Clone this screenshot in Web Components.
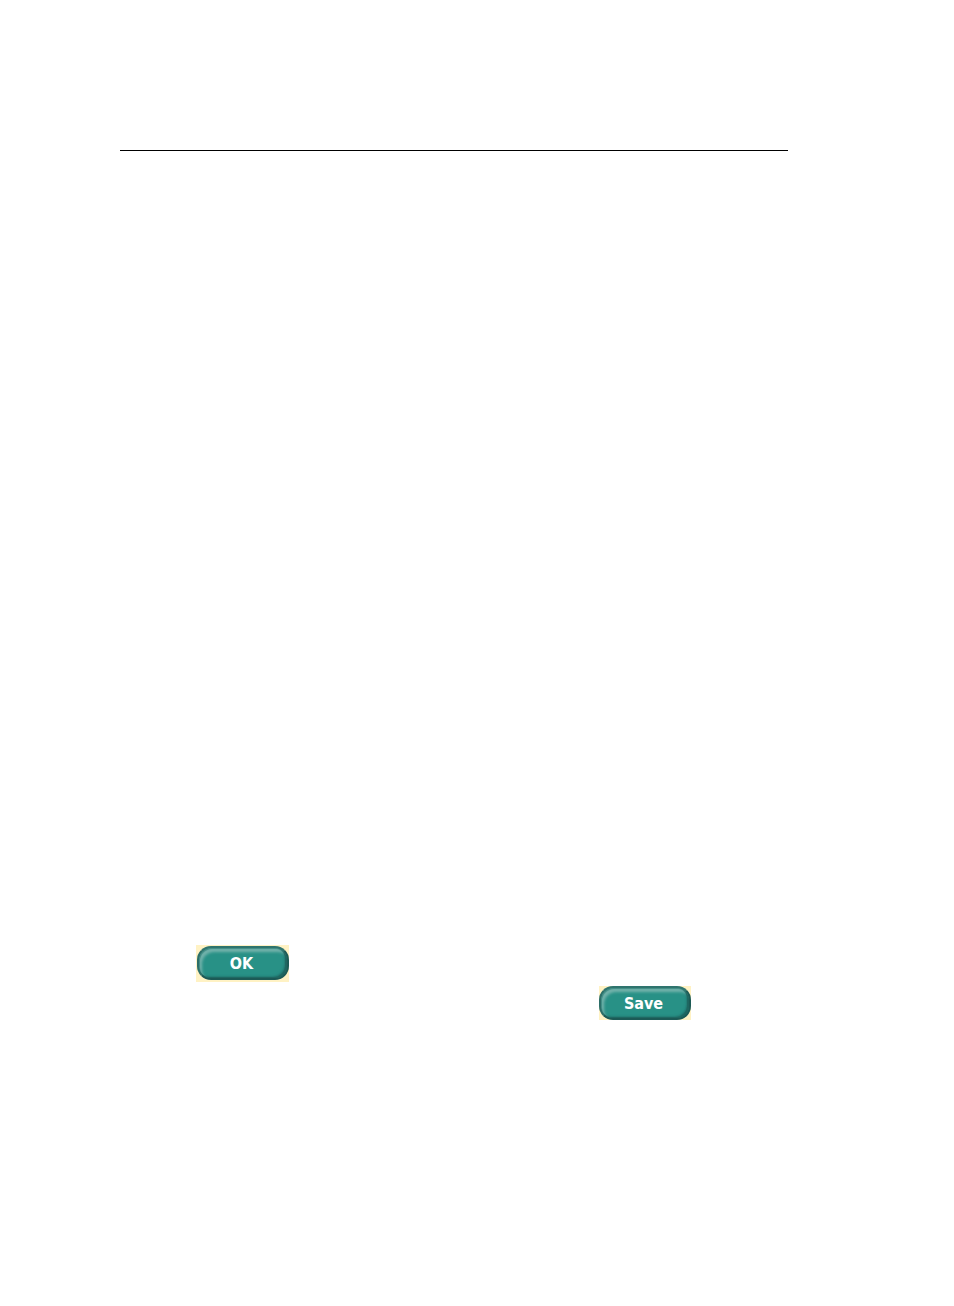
<!DOCTYPE html>
<html lang="en">
<head>
<meta charset="utf-8">
<title>Page</title>
<style>
  body {
    margin: 0;
    background: #fff;
    font-family: "DejaVu Sans Condensed", "DejaVu Sans", sans-serif;
  }
</style>
</head>
<body>
<manual-page>
  <pill-button slot="start" class="framed">OK</pill-button>
  <pill-button slot="end">Save</pill-button>
</manual-page>

<script>
class ManualPage extends HTMLElement {
  constructor() {
    super();
    const shadow = this.attachShadow({ mode: "open" });
    shadow.innerHTML = `
      <style>
        :host {
          display: block;
          padding: 150px 166px 0 120px;
        }
        hr {
          height: 1px;
          margin: 0;
          border: 0;
          background: #000;
        }
        .content {
          display: flex;
          flex-direction: column;
          gap: 4px;
          padding: 794px 97px 0 76px;
        }
        .row {
          display: flex;
        }
        .end {
          justify-content: flex-end;
        }
      </style>
      <hr>
      <div class="content">
        <div class="row"><slot name="start"></slot></div>
        <div class="row end"><slot name="end"></slot></div>
      </div>
    `;
  }
}

class PillButton extends HTMLElement {
  constructor() {
    super();
    const shadow = this.attachShadow({ mode: "open" });
    shadow.innerHTML = `
      <style>
        :host {
          display: block;
          background: #fff2c4;
        }
        :host(.framed) {
          padding: 1px 0 2px 1px;
        }
        button {
          display: block;
          box-sizing: border-box;
          width: 92px;
          height: 34px;
          padding: 2px 3px 0 0;
          border: 2px solid;
          border-color: #2f746e #1c5a56 #1c5a56 #2c6e68;
          border-radius: 14px;
          background: #289186;
          box-shadow:
            inset 1px 1px 1px #3f8b83,
            inset -2px -1px 1px #1f6660,
            inset 3px 4px 3px #74b3ac,
            inset -3px -2px 2px #247f77;
          color: #fff;
          font: bold 16px/20px "DejaVu Sans Condensed", "DejaVu Sans", sans-serif;
          text-align: center;
        }
      </style>
      <button type="button"><slot></slot></button>
    `;
  }
}

customElements.define("manual-page", ManualPage);
customElements.define("pill-button", PillButton);
</script>
</body>
</html>
